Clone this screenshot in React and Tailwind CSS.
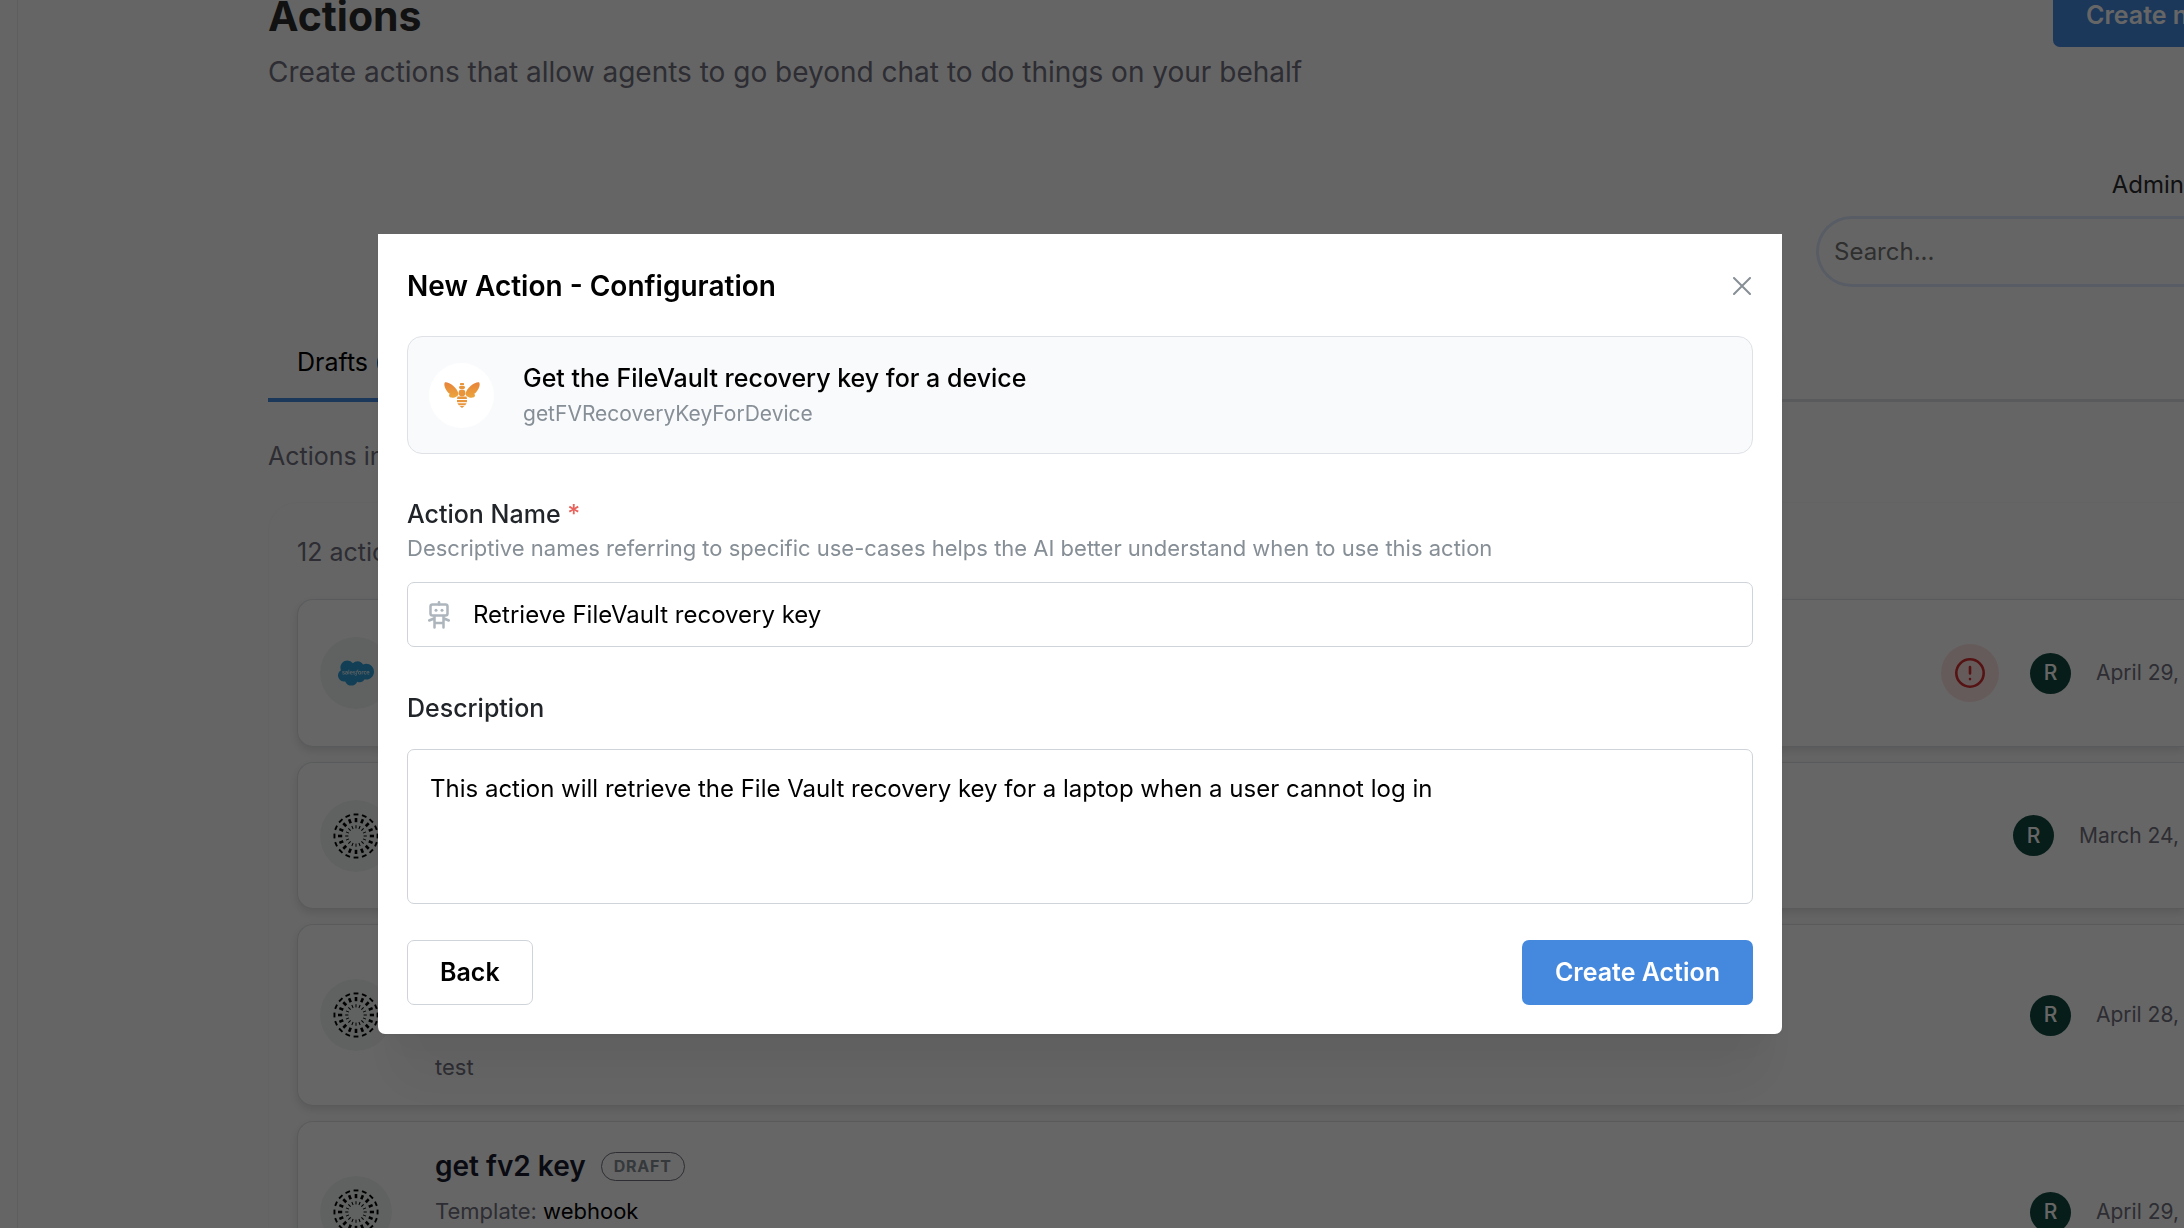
import { FaSalesforce } from "react-icons/fa";

const SPOKES = Array.from({ length: 16 }, (_, i) => i * 22.5);

function WebhookIcon() {
  return (
    <svg viewBox="-24 -24 48 48" className="size-12 text-black" fill="currentColor" aria-hidden="true">
      {SPOKES.map((angle) => (
        <g key={angle} transform={`rotate(${angle})`}>
          <rect x="-2.4" y="-22.5" width="4.8" height="1.9" />
          <rect x="-1.3" y="-18" width="2.6" height="4.2" />
          <rect x="-0.5" y="-10.8" width="1" height="3.2" />
        </g>
      ))}
    </svg>
  );
}

function BeeIcon() {
  return (
    <svg viewBox="0 0 36 26" className="h-[26px] w-9" aria-hidden="true">
      <defs>
        <linearGradient id="bee" x1="0" y1="0" x2="0" y2="1">
          <stop offset="0" stopColor="#e8833a" />
          <stop offset="1" stopColor="#eba53c" />
        </linearGradient>
      </defs>
      <g fill="url(#bee)">
        <path d="M1 0.3C5 -0.4 13 5.5 14.5 11.5C14.5 14.5 10.5 16.2 7 15.6C5 15.2 4.4 13.2 5.8 11.8C2.5 10 -1.2 3 1 0.3Z" />
        <path d="M35 0.3C31 -0.4 23 5.5 21.5 11.5C21.5 14.5 25.5 16.2 29 15.6C31 15.2 31.6 13.2 30.2 11.8C33.5 10 37.2 3 35 0.3Z" />
      </g>
      <g fill="#e8953c">
        <rect x="16" y="1" width="4" height="2.2" rx="0.6" />
        <rect x="15" y="4" width="6" height="3" rx="1.4" />
        <circle cx="18" cy="11" r="3.4" />
        <path d="M13.5 14.5h9l.5 2.5H13Z" />
        <rect x="13" y="18" width="10" height="2.2" />
        <path d="M13.4 21.2h9.2l-1.4 2h-6.4Z" />
        <path d="M15.6 24h4.8L18 26Z" />
      </g>
    </svg>
  );
}

function RobotIcon() {
  return (
    <svg viewBox="0 0 22 28" className="h-7 w-[22px] shrink-0 text-[#adb5bd]" fill="none" stroke="currentColor" strokeWidth="2.5" strokeLinecap="round" strokeLinejoin="round" aria-hidden="true">
      <path d="M11 1.2v2.300" />
      <rect x="2.500" y="3.500" width="17" height="11" rx="2" />
      <circle cx="8" cy="9.200" r="1.500" fill="currentColor" stroke="none" />
      <circle cx="14" cy="9.200" r="1.500" fill="currentColor" stroke="none" />
      <path d="M6.500 15v11.500M15.500 15v11.500M6.500 22h9M6 17.500L1.200 19.500M16 17.500L20.800 19.500" />
    </svg>
  );
}

function CloseIcon() {
  return (
    <svg viewBox="0 0 18 18" className="size-[18px]" fill="none" stroke="currentColor" strokeWidth="2" strokeLinecap="round" aria-hidden="true">
      <path d="M1 1l16 16M17 1L1 17" />
    </svg>
  );
}

function AlertIcon() {
  return (
    <svg viewBox="0 0 30 30" className="size-[30px]" fill="none" stroke="currentColor" strokeWidth="2.6" strokeLinecap="round" aria-hidden="true">
      <circle cx="15" cy="15" r="13.7" />
      <path d="M15 9v6.500M15 21v.1" />
    </svg>
  );
}

function ActionCard({ icon, alert, date, height, children }) {
  return (
    <li className={`flex items-center rounded-l-2xl border border-r-0 border-[#dee2e6] bg-white pl-[22px] pr-[5px] shadow-[0_4px_10px_rgba(0,0,0,0.12)] ${height}`}>
      <span className="flex size-[72px] shrink-0 items-center justify-center rounded-full bg-[#f1f5f3]">{icon}</span>
      <div className="ml-[43px] flex flex-1 flex-col self-stretch">{children}</div>
      {alert && (
        <span className="mr-[31px] flex size-[58px] items-center justify-center rounded-full bg-[#ffe3e3] text-[#d63031]">
          <AlertIcon />
        </span>
      )}
      <span className="flex size-[41px] items-center justify-center rounded-full bg-[#134a40] text-[21px] font-medium text-white">R</span>
      <time className="ml-[25px] text-[21px] text-[#71717f]">{date}</time>
    </li>
  );
}

function Page() {
  return (
    <div className="flex h-screen overflow-hidden bg-[#fdfdfd]">
      <div className="w-[18px] shrink-0 border-r border-[#ececec]" />
      <main className="min-w-0 flex-1 pl-[250px]">
        <header className="flex items-start justify-between">
          <div className="-mt-2">
            <h1 className="text-[41px] leading-[48px] font-bold text-[#2b2b2f]">Actions</h1>
            <p className="mt-3 text-[28px] leading-10 text-[#71717f]">
              Create actions that allow agents to go beyond chat to do things on your behalf
            </p>
          </div>
          <button type="button" className="-mt-[18px] flex h-[65px] w-[131px] items-center overflow-hidden rounded-l-[7px] bg-[#4589df] pt-0.5 pl-[33px] text-[25px] font-semibold whitespace-nowrap text-white">
            Create new
          </button>
        </header>

        <div className="mt-[75px] flex flex-col items-end">
          <label htmlFor="search" className="text-[24px] leading-9 text-[#2b2b2f]">Admin</label>
          <input id="search" type="search" placeholder="Search..." className="mt-[13px] h-[71px] w-[368px] rounded-l-full border-[3px] border-r-0 border-[#dbe7fb] bg-transparent pl-[15px] text-[24px] placeholder:text-[#757575]" />
        </div>

        <nav className="mt-[44px] flex border-b-[3px] border-[#dee2e6]">
          <button type="button" className="-mb-[3px] flex h-[71px] items-center gap-[9px] border-b-4 border-[#4589df] px-[29px] pb-1 text-[25px] text-black">
            Drafts
            <span className="size-8 rounded-full bg-[#1971c2]" />
          </button>
        </nav>

        <p className="mt-[36px] text-[25px] leading-9 text-[#71717f]">Actions in</p>

        <section className="mt-[28px] rounded-tl-[29px] border-t border-l border-[#f8f8f8] pl-7">
          <p className="mt-[31px] text-[25px] leading-9 text-[#71717f]">12 actions</p>
          <ul className="mt-[29px] flex flex-col gap-[15px]">
            <ActionCard height="h-[148px]" icon={<FaSalesforce className="size-9 text-[#2f9fd8]" />} alert date="April 29," />
            <ActionCard height="h-[147px]" icon={<WebhookIcon />} date="March 24," />
            <ActionCard height="h-[182px]" icon={<WebhookIcon />} date="April 28,">
              <p className="mt-auto mb-[22px] text-[22px] leading-8 text-[#71717f]">test</p>
            </ActionCard>
            <ActionCard height="h-[182px]" icon={<WebhookIcon />} date="April 29,">
              <div className="mt-[26px] flex items-center gap-[15px]">
                <h2 className="text-[28px] leading-9 font-semibold text-[#1a1b2e]">get fv2 key</h2>
                <span className="flex h-[29px] items-center rounded-full border border-[#71717f] px-3 text-[16px] font-bold tracking-wider text-[#868e96]">DRAFT</span>
              </div>
              <p className="mt-[11px] text-[22px] leading-8 text-[#71717f]">
                Template: <span className="text-black">webhook</span>
              </p>
            </ActionCard>
          </ul>
        </section>
      </main>
    </div>
  );
}

function Dialog() {
  return (
    <div className="fixed inset-0 flex items-start justify-center bg-black/60 pt-[234px] pr-6">
      <div role="dialog" aria-modal="true" aria-labelledby="dialog-title" className="w-[1404px] max-w-full rounded-b-[7px] bg-white p-[29px] shadow-[0_2px_5px_rgba(0,0,0,0.05),0_65px_50px_-13px_rgba(0,0,0,0.05),0_30px_30px_-13px_rgba(0,0,0,0.04)]">
        <header className="flex h-[46px] items-center justify-between">
          <h2 id="dialog-title" className="text-[28px] font-semibold text-black">New Action - Configuration</h2>
          <button type="button" aria-label="Close" className="flex size-[22px] items-center justify-center text-[#868e96]">
            <CloseIcon />
          </button>
        </header>

        <div className="mt-[27px] flex h-[118px] items-center rounded-[15px] border border-[#dee2e6] bg-[#f9fafc] px-[21px]">
          <span className="flex size-[65px] items-center justify-center rounded-full bg-white">
            <BeeIcon />
          </span>
          <div className="ml-[29px] pt-0.5">
            <h3 className="text-[25px] leading-9 font-medium text-black">Get the FileVault recovery key for a device</h3>
            <p className="text-[21px] leading-9 text-[#868e96]">getFVRecoveryKeyForDevice</p>
          </div>
        </div>

        <form className="mt-[42px]">
          <label htmlFor="name" className="block text-[25px] leading-9 font-medium text-[#212529]">
            Action Name <span className="text-[#e8635c]">*</span>
          </label>
          <p id="name-hint" className="text-[22px] leading-8 text-[#868e96]">
            Descriptive names referring to specific use-cases helps the AI better understand when to use this action
          </p>
          <div className="mt-[18px] flex h-[65px] items-center gap-[23px] rounded-[7px] border border-[#ced4da] pl-5">
            <RobotIcon />
            <input id="name" aria-describedby="name-hint" defaultValue="Retrieve FileVault recovery key" className="h-full flex-1 bg-transparent text-[24px] text-black outline-none" />
          </div>

          <label htmlFor="description" className="mt-[43px] block text-[25px] leading-9 font-medium text-[#212529]">Description</label>
          <textarea id="description" defaultValue="This action will retrieve the File Vault recovery key for a laptop when a user cannot log in" className="mt-[23px] block h-[155px] w-full resize-none rounded-[7px] border border-[#ced4da] px-[22px] py-[19px] text-[24px] leading-10 text-black outline-none" />

          <div className="mt-9 flex justify-between">
            <button type="button" className="h-[65px] rounded-[7px] border border-[#ced4da] px-8 text-[25px] font-semibold text-black">Back</button>
            <button type="submit" className="h-[65px] rounded-[7px] bg-[#4589df] px-[33px] text-[25px] font-semibold text-white">Create Action</button>
          </div>
        </form>
      </div>
    </div>
  );
}

export default function App() {
  return (
    <div className="font-['Inter',sans-serif]">
      <Page />
      <Dialog />
    </div>
  );
}
